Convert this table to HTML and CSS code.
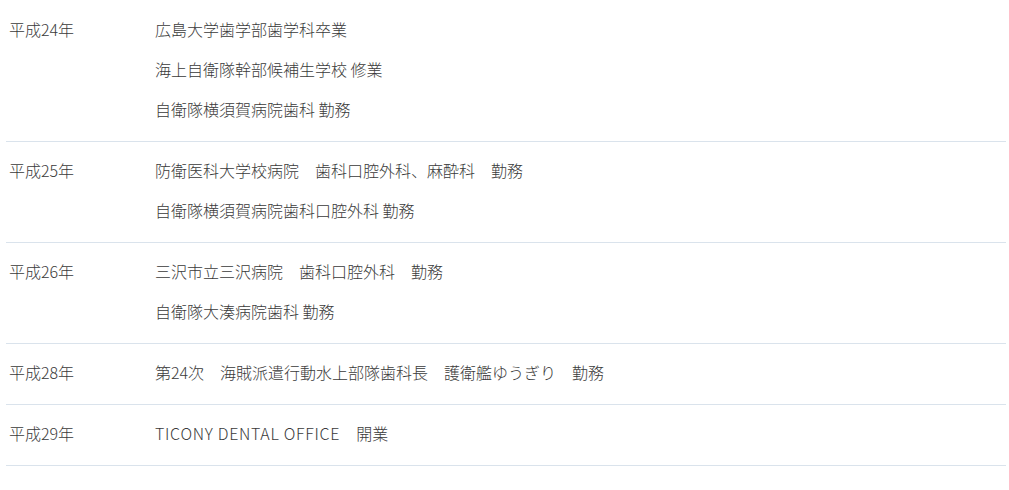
FILE: index.html
```html
<!DOCTYPE html>
<html lang="ja">
<head>
<meta charset="utf-8">
<title>経歴</title>
<link rel="stylesheet" href="styles.css">
</head>
<body>
<dl class="history">
  <div class="row">
    <dt class="year">平成24年</dt>
    <dd class="events">
      <p>広島大学歯学部歯学科卒業</p>
      <p>海上自衛隊幹部候補生学校 修業</p>
      <p>自衛隊横須賀病院歯科 勤務</p>
    </dd>
  </div>
  <div class="row">
    <dt class="year">平成25年</dt>
    <dd class="events">
      <p>防衛医科大学校病院　歯科口腔外科、麻酔科　勤務</p>
      <p>自衛隊横須賀病院歯科口腔外科 勤務</p>
    </dd>
  </div>
  <div class="row">
    <dt class="year">平成26年</dt>
    <dd class="events">
      <p>三沢市立三沢病院　歯科口腔外科　勤務</p>
      <p>自衛隊大湊病院歯科 勤務</p>
    </dd>
  </div>
  <div class="row">
    <dt class="year">平成28年</dt>
    <dd class="events">
      <p>第24次　海賊派遣行動水上部隊歯科長　護衛艦ゆうぎり　勤務</p>
    </dd>
  </div>
  <div class="row">
    <dt class="year">平成29年</dt>
    <dd class="events">
      <p><span class="latin">TICONY DENTAL OFFICE</span>　開業</p>
    </dd>
  </div>
</dl>
</body>
</html>
```
FILE: styles.css
```css
html, body {
  margin: 0;
  padding: 0;
  background: #ffffff;
}

body {
  font-family: "Noto Sans CJK JP", "Noto Sans", sans-serif;
  font-size: 16px;
  font-weight: 300;
  color: #3a3a3a;
}

.history {
  margin: 0 3px 0 6px;
  padding: 1px 0 0;
}

.row {
  display: grid;
  grid-template-columns: 149px 1fr;
  padding: 8px 0 12px;
  border-bottom: 1px solid #dae3ec;
}

.year {
  margin: 0;
  padding-left: 3px;
  line-height: 40px;
}

.events {
  margin: 0;
}

.events p {
  margin: 0;
  line-height: 40px;
  white-space: nowrap;
}

.latin {
  letter-spacing: 0.7px;
}
```
